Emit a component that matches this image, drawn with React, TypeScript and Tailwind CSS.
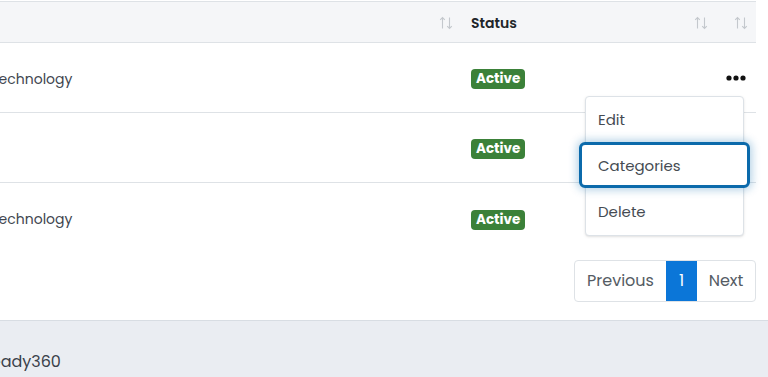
import { useState } from 'react';

type Row = { id: number; category: string; status: string };

const rows: Row[] = [
  { id: 1, category: 'Technology', status: 'Active' },
  { id: 2, category: '', status: 'Active' },
  { id: 3, category: 'Technology', status: 'Active' },
];

function SortIcon() {
  return (
    <svg width="14" height="14" viewBox="0 0 14 14" fill="none" stroke="#c4c8cd" strokeWidth="1.1" aria-hidden="true">
      <path d="M3.5 1.5v11M1.2 3.8l2.3-2.3 2.3 2.3" />
      <path d="M10.5 1.5v11M8.2 10.2l2.3 2.3 2.3-2.3" />
    </svg>
  );
}

function Dots() {
  return (
    <svg width="20" height="6" viewBox="0 0 20 6" aria-hidden="true">
      <circle cx="3" cy="3" r="2.6" fill="#111" />
      <circle cx="10" cy="3" r="2.6" fill="#111" />
      <circle cx="17" cy="3" r="2.6" fill="#111" />
    </svg>
  );
}

export default function App() {
  const [focused] = useState('Categories');

  return (
    <div className="h-[377px] w-[768px] overflow-hidden bg-white font-['Poppins','DejaVu_Sans',sans-serif] text-[15px] text-[#3f4650]">
      <div className="pr-3 pt-px">
        <div className="relative">
          <div className="grid h-[42px] grid-cols-[459px_257px_40px] border-y border-[#dee2e6] bg-[#f5f6f8] pt-[2px]">
            <div className="flex items-center justify-end pr-[6px]">
              <SortIcon />
            </div>
            <div className="flex items-center justify-between pl-3 pr-2">
              <span className="text-[14px] font-semibold text-[#212529]">Status</span>
              <SortIcon />
            </div>
            <div className="flex items-center justify-end pr-2">
              <SortIcon />
            </div>
          </div>

          {rows.map((r, i) => (
            <div
              key={r.id}
              className={`grid h-[70px] grid-cols-[459px_257px_40px] pt-[3px] ${i < rows.length - 1 ? 'border-b border-[#dee2e6]' : ''}`}
            >
              <div className="flex items-center">
                <span className="-ml-[9px] text-[14px]">{r.category}</span>
              </div>
              <div className="flex items-center pl-3">
                <span className="rounded-[4px] bg-[#3b8139] px-[5px] py-px text-[13.5px] font-bold leading-[18px] text-white">
                  {r.status}
                </span>
              </div>
              <div className="flex items-center justify-center pb-[2px]">{i === 0 ? <Dots /> : null}</div>
            </div>
          ))}

          <div className="absolute left-[585px] top-[95px] w-[159px] rounded-[4px] border border-[#dde2e7] bg-white text-[#454b52] shadow-sm">
            {['Edit', 'Categories', 'Delete'].map((item) => (
              <div key={item} className="relative flex h-[46px] items-center px-3">
                {item === focused ? (
                  <div className="absolute -left-[7px] -right-[7px] -top-[1px] bottom-[1px] rounded-[6px] border-[3px] border-[#0b6aab] bg-white shadow-[0_0_8px_2px_rgba(11,106,171,0.3)]" />
                ) : null}
                <span className="relative">{item}</span>
              </div>
            ))}
          </div>
        </div>

        <div className="mt-[7px] flex justify-end">
          <div className="flex h-[42px] overflow-hidden rounded-[4px] border border-[#dee2e6] text-[16px] text-[#555c64]">
            <span className="flex w-[91px] items-center justify-center">Previous</span>
            <span className="flex w-[31px] items-center justify-center bg-[#0b76d8] text-white">1</span>
            <span className="flex w-[58px] items-center justify-center">Next</span>
          </div>
        </div>
      </div>

      <div className="mt-[18px] h-[60px] border-t border-[#d8dde3] bg-[#eaedf2] pt-[29px]">
        <div className="-ml-[19px] text-[16px] leading-[24px] text-[#3a414a]">Ready360</div>
        <div className="-ml-[4px] text-[12px] leading-[16px] text-[#9aa2ab]">Admin panel</div>
      </div>
    </div>
  );
}
